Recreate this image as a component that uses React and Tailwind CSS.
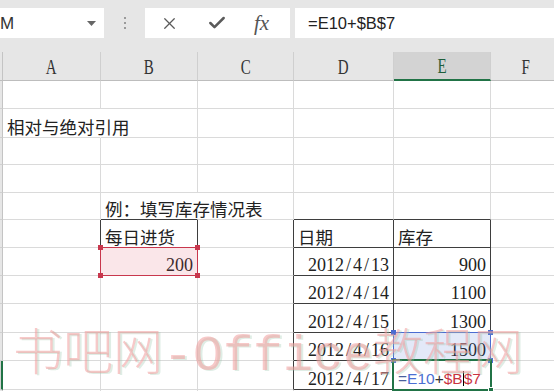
import { X, Check } from "lucide-react";

const CJK = "font-['Noto_Sans_CJK_SC',sans-serif]";
const SERIF = "font-['Liberation_Serif',serif]";
const SANS = "font-['Liberation_Sans',sans-serif]";

const COLS = ["A", "B", "C", "D", "E", "F"];
const WIDTHS = ["w-[98px]", "w-[97px]", "w-[96px]", "w-[100px]", "w-[97px]", "w-[70px]"];
const HEIGHTS = [
  "h-[28px]", "h-[29px]", "h-[27px]", "h-[28px]", "h-[27px]", "h-[28px]",
  "h-[28px]", "h-[28px]", "h-[29px]", "h-[28px]", "h-[29px]", "h-[28px]",
];

const RB = { g: "border-r-[#dadada]", d: "border-r-[#3e3e3e]", n: "border-r-transparent" };
const BB = { g: "border-b-[#dadada]", d: "border-b-[#3e3e3e]" };

const cjk = (t) => <span className={`${CJK} whitespace-nowrap pb-[2px] text-[17.5px] leading-none text-[#222]`}>{t}</span>;
const num = (t) => <span className={`${SERIF} whitespace-nowrap pb-[1px] text-[18px] leading-none text-[#222]`}>{t}</span>;
const date = (t) => (
  <span className={`${SERIF} whitespace-nowrap pb-[1px] text-[18px] leading-none text-[#222]`}>
    {t.split("/").map((part, i) => (
      <span key={i}>
        {i > 0 && <span className="inline-block w-[9px] text-center">/</span>}
        {part}
      </span>
    ))}
  </span>
);

const formula = (
  <span className={`${SANS} whitespace-nowrap pb-[3px] text-[15.5px] leading-none`}>
    <span className="text-[#4a5f9e]">=</span>
    <span className="text-[#4b6fd3]">E10</span>
    <span className="text-[#333]">+</span>
    <span className="text-[#c9323f]">$B</span>
    <span className="inline-block h-[15px] w-px translate-y-[2px] bg-black" />
    <span className="text-[#c9323f]">$7</span>
  </span>
);

const tableRow = (d, v, extra = {}) => ({
  2: { rb: "d" },
  3: { content: date(d), align: "r", rb: "d", bb: "d" },
  4: { content: v, align: "r", rb: "d", bb: "d", ...extra },
});

const ROWS = [
  {},
  { 0: { content: cjk("相对与绝对引用"), rb: "n" } },
  {},
  {},
  { 1: { content: cjk("例：填写库存情况表"), rb: "n", bb: "d" }, 3: { bb: "d" }, 4: { bb: "d" } },
  {
    0: { rb: "d" },
    1: { content: cjk("每日进货"), rb: "d", bb: "d" },
    2: { rb: "d" },
    3: { content: cjk("日期"), rb: "d", bb: "d" },
    4: { content: cjk("库存"), rb: "d", bb: "d" },
  },
  { 1: { content: num("200"), align: "r", overlay: "red" }, ...tableRow("2012/4/13", num("900")) },
  tableRow("2012/4/14", num("1100")),
  tableRow("2012/4/15", num("1300")),
  tableRow("2012/4/16", num("1500"), { overlay: "blue" }),
  tableRow("2012/4/17", formula, { align: "l", overlay: "green" }),
  {},
];

function RefBox({ border, fill, handle }) {
  return (
    <div className={`pointer-events-none absolute -inset-px z-10 border ${border} ${fill}`}>
      <span className={`absolute -left-[3px] -top-[3px] h-[5px] w-[5px] ${handle}`} />
      <span className={`absolute -right-[3px] -top-[3px] h-[5px] w-[5px] ${handle}`} />
      <span className={`absolute -bottom-[3px] -left-[3px] h-[5px] w-[5px] ${handle}`} />
      <span className={`absolute -bottom-[3px] -right-[3px] h-[5px] w-[5px] ${handle}`} />
    </div>
  );
}

function Cell({ w, spec }) {
  const s = spec || {};
  return (
    <div
      className={`relative flex shrink-0 items-end border-r border-b ${w} ${RB[s.rb || "g"]} ${BB[s.bb || "g"]} ${
        s.align === "r" ? "justify-end pr-[4px]" : "justify-start pl-[4px]"
      }`}
    >
      {s.content}
      {s.overlay === "red" && <RefBox border="border-[#c8374d]" fill="bg-[#e05a6a]/15" handle="bg-[#c8374d]" />}
      {s.overlay === "blue" && <RefBox border="border-[#4b6cd1]" fill="bg-[#466ed2]/15" handle="bg-[#4b6cd1]" />}
      {s.overlay === "green" && (
        <div className="pointer-events-none absolute -inset-[2px] z-10 border-2 border-[#217346]">
          <span className="absolute -bottom-[4px] -right-[4px] h-[6px] w-[6px] border border-white bg-[#217346]" />
        </div>
      )}
    </div>
  );
}

function TopBar() {
  return (
    <div className="flex h-[52px] shrink-0 items-start bg-[#e6e6e6] pt-[8px]">
      <div className="flex h-[30px] w-[104px] items-center bg-white">
        <span className={`${SANS} text-[17px] leading-none text-[#333]`}>M</span>
        <svg className="ml-auto mr-[8px]" width="9" height="5" viewBox="0 0 9 5">
          <polygon points="0,0 9,0 4.5,5" fill="#666" />
        </svg>
      </div>
      <div className="flex h-[30px] w-[41px] flex-col items-center justify-center gap-[3px]">
        <span className="h-[2px] w-[2px] bg-[#9a9a9a]" />
        <span className="h-[2px] w-[2px] bg-[#9a9a9a]" />
        <span className="h-[2px] w-[2px] bg-[#9a9a9a]" />
      </div>
      <div className="flex h-[30px] w-[145px] items-center bg-white pl-[15px]">
        <X size={19} strokeWidth={1.6} color="#5a5a5a" />
        <Check size={20} strokeWidth={3} color="#5a5a5a" className="ml-[28px]" />
        <span className={`${SERIF} ml-[27px] text-[21px] italic leading-none text-[#555]`}>fx</span>
      </div>
      <div className="ml-[5px] flex h-[30px] flex-1 items-center bg-white pl-[13px]">
        <span className={`${SANS} text-[16.5px] leading-none text-[#222]`}>=E10+$B$7</span>
      </div>
    </div>
  );
}

function HeaderRow() {
  return (
    <div className="flex h-[29px] shrink-0">
      <div className="w-[3px] shrink-0 border-r border-b border-r-[#c4c4c4] border-b-[#bdbdbd] bg-[#e6e6e6]" />
      {COLS.map((c, i) => (
        <div
          key={c}
          className={`flex shrink-0 items-end justify-center border-r border-r-[#cfcfcf] pb-[3px] ${WIDTHS[i]} ${
            c === "E" ? "border-b-2 border-b-[#217346] bg-[#d3d3d3] text-[#1e5e3a]" : "border-b border-b-[#bdbdbd] bg-[#e6e6e6] text-[#333]"
          }`}
        >
          <span className={`${SERIF} inline-block scale-x-75 text-[20px] leading-none`}>{c}</span>
        </div>
      ))}
    </div>
  );
}

export default function App() {
  return (
    <div className="relative flex h-[391px] w-[554px] flex-col overflow-hidden bg-white">
      <TopBar />
      <HeaderRow />
      {ROWS.map((row, r) => (
        <div key={r} className={`flex shrink-0 ${HEIGHTS[r]}`}>
          <div
            className={`w-[3px] shrink-0 border-r border-b border-b-[#d0d0d0] ${
              r === 10 ? "border-r-2 border-r-[#217346] bg-[#d3d3d3]" : "border-r-[#c4c4c4] bg-[#e6e6e6]"
            }`}
          />
          {COLS.map((c, i) => (
            <Cell key={c} w={WIDTHS[i]} spec={row[i]} />
          ))}
        </div>
      ))}

      <div className="pointer-events-none absolute left-[13px] top-[323px] z-30 flex items-baseline whitespace-nowrap text-[50px] leading-none text-[#f09c9c]/55 [text-shadow:2px_1px_0_rgba(150,195,170,0.3)]">
        <span className={`${CJK} font-light`}>书吧网</span>
        <span className="font-['Liberation_Mono',monospace]">-Office</span>
        <span className={`${CJK} font-light`}>教程网</span>
      </div>
    </div>
  );
}
